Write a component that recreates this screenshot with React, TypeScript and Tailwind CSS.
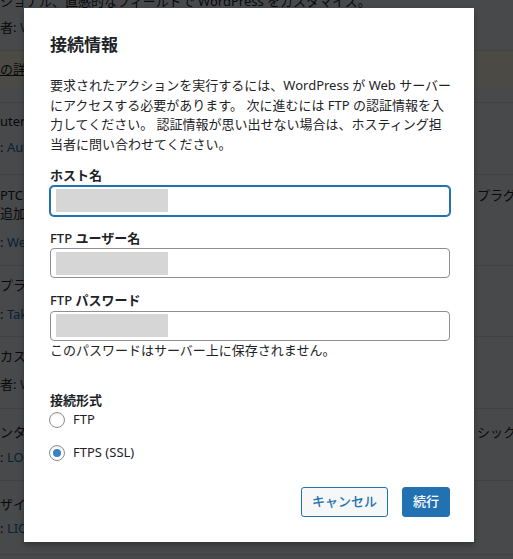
import React from 'react';

const font = { fontFamily: '"Noto Sans", "Noto Sans CJK JP", sans-serif' };

interface BgRow {
	height: number;
	tone?: 'row' | 'notice';
	lines: { top: number; left: React.ReactNode; right?: React.ReactNode }[];
}

const link = 'text-[#2271b1]';

const rows: BgRow[] = [
	{
		height: 51,
		lines: [
			{ top: -8, left: <span>ショナル、直感的なフィールドで WordPress をカスタマイズ。</span> },
			{ top: 18, left: <span>者: <span className={link}>WP Engine</span></span> },
		],
	},
	{
		height: 36,
		tone: 'notice',
		lines: [{ top: 9, left: <span className="underline">の詳細を表示</span> }],
	},
	{ height: 16, lines: [] },
	{
		height: 72,
		lines: [
			{ top: 9, left: <span>uter</span> },
			{ top: 35, left: <span>: <span className={link}>Automattic</span></span> },
		],
	},
	{
		height: 91,
		lines: [
			{ top: 11, left: <span>PTCHA</span>, right: <span>プラグイン</span> },
			{ top: 29, left: <span>追加</span> },
			{ top: 58, left: <span>: <span className={link}>Web</span></span> },
		],
	},
	{
		height: 71,
		lines: [
			{ top: 10, left: <span>プラグ</span> },
			{ top: 39, left: <span>: <span className={link}>Takayuki</span></span> },
		],
	},
	{
		height: 72,
		lines: [
			{ top: 10, left: <span>カスタム</span> },
			{ top: 38, left: <span>者: <span className={link}>WordPress</span></span> },
		],
	},
	{
		height: 72,
		lines: [
			{ top: 14, left: <span>ンタッチ</span>, right: <span>シック</span> },
			{ top: 39, left: <span>: <span className={link}>LOCKON</span></span> },
		],
	},
	{
		height: 74,
		lines: [
			{ top: 14, left: <span>ザイン</span> },
			{ top: 38, left: <span>: <span className={link}>LIQUID</span></span> },
		],
	},
	{ height: 40, lines: [] },
];

function Background() {
	return (
		<div className="w-full">
			{rows.map((row, i) => (
				<div
					key={i}
					className={
						row.tone === 'notice'
							? 'relative overflow-hidden bg-[#fcf9e8]'
							: 'relative overflow-hidden bg-[#f0f6fc] border-b border-[#dcdcde]'
					}
					style={{ height: row.height }}
				>
					{row.lines.map((line, j) => (
						<div
							key={j}
							className="flex justify-between whitespace-nowrap text-[13px] leading-[19px] text-[#1d2327]"
							style={{ marginTop: j === 0 ? line.top : line.top - row.lines[j - 1].top - 19 }}
						>
							<div>{line.left}</div>
							{line.right && <div className="w-[36px] overflow-hidden">{line.right}</div>}
						</div>
					))}
				</div>
			))}
		</div>
	);
}

function TextField({ label, focused }: { label: React.ReactNode; focused?: boolean }) {
	return (
		<div>
			<label className="block text-[13px] leading-[19.5px] font-bold text-[#1d2327]">{label}</label>
			<div
				className={
					focused
						? 'flex h-[30px] items-center rounded-[4px] border border-[#2271b1] bg-white px-[5px] shadow-[0_0_0_1px_#2271b1]'
						: 'flex h-[30px] items-center rounded-[4px] border border-[#8c8f94] bg-white px-[5px]'
				}
			>
				<div className="h-[23px] w-[112px] bg-[#d6d6d6]" />
			</div>
		</div>
	);
}

function Radio({ label, checked }: { label: string; checked?: boolean }) {
	return (
		<label className="flex h-4 items-center gap-2 text-[13px] font-normal text-[#1d2327]">
			<span className="-ml-px flex h-4 w-4 items-center justify-center rounded-full border border-[#8c8f94] bg-white shadow-[inset_0_1px_2px_rgba(0,0,0,0.1)]">
				{checked && <span className="h-2 w-2 rounded-full bg-[#3582c4]" />}
			</span>
			<span>{label}</span>
		</label>
	);
}

export default function App() {
	return (
		<div className="relative h-[559px] w-full overflow-hidden bg-white" style={font}>
			<Background />

			{/* Dialog backdrop */}
			<div className="absolute inset-0 bg-black/70" />

			<div className="absolute left-[24px] top-[8px] w-[450px] bg-white pb-[25px] pl-[26px] pr-[24px] pt-[26px] text-[#1d2327] shadow-[0_3px_6px_rgba(0,0,0,0.3)]">
				<h2 className="text-[17px] font-bold leading-[22px]">接続情報</h2>

				<p className="mt-[20px] whitespace-nowrap text-[13px] leading-[19.5px]">
					要求されたアクションを実行するには、WordPress が Web サーバー
					<br />
					にアクセスする必要があります。 次に進むには FTP の認証情報を入
					<br />
					力してください。 認証情報が思い出せない場合は、ホスティング担
					<br />
					当者に問い合わせてください。
				</p>

				<div className="mt-[12px]">
					<TextField label="ホスト名" focused />
				</div>
				<div className="mt-[13px]">
					<TextField label={<><span className="font-medium">FTP</span> ユーザー名</>} />
				</div>
				<div className="mt-[13px]">
					<TextField label={<><span className="font-medium">FTP</span> パスワード</>} />
					<p className="text-[13px] leading-[19.5px]">このパスワードはサーバー上に保存されません。</p>
				</div>

				<fieldset className="mt-[31px]">
					<legend className="text-[13px] font-bold leading-[19.5px]">接続形式</legend>
					<div className="mt-[1px] flex flex-col gap-[17px]">
						<Radio label="FTP" />
						<Radio label="FTPS (SSL)" checked />
					</div>
				</fieldset>

				<div className="mt-[26px] flex justify-end gap-[14px]">
					<button className="h-[30px] rounded-[3px] border border-[#2271b1] bg-[#f6f7f7] px-[10px] text-[13px] font-medium text-[#2271b1]">
						キャンセル
					</button>
					<button className="h-[30px] rounded-[3px] border border-[#2271b1] bg-[#2271b1] px-[10px] text-[13px] font-medium text-white">
						続行
					</button>
				</div>
			</div>
		</div>
	);
}
